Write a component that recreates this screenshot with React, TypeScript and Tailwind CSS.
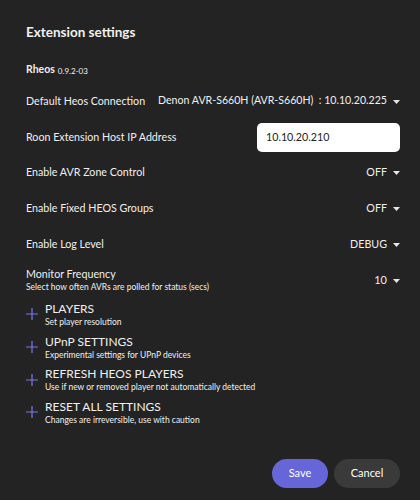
const Caret = () => (
  <svg width="7" height="4" viewBox="0 0 7 4" className="ml-[6px] mt-[2px] shrink-0">
    <path d="M0 0 L7 0 L3.5 4 Z" fill="#e6e6e6" />
  </svg>
);

const rows = [
  { label: 'Enable AVR Zone Control', value: 'OFF' },
  { label: 'Enable Fixed HEOS Groups', value: 'OFF' },
  { label: 'Enable Log Level', value: 'DEBUG' },
];

const sections = [
  { title: 'PLAYERS', sub: 'Set player resolution' },
  { title: 'UPnP SETTINGS', sub: 'Experimental settings for UPnP devices' },
  { title: 'REFRESH HEOS PLAYERS', sub: 'Use if new or removed player not automatically detected' },
  { title: 'RESET ALL SETTINGS', sub: 'Changes are irreversible, use with caution' },
];

const Plus = () => (
  <svg width="12" height="12" viewBox="0 0 12 12" className="shrink-0">
    <path d="M6 0 V12 M0 6 H12" stroke="#7a78ea" strokeWidth="1.2" />
  </svg>
);

const App = () => {
  return (
    <div
      className="w-[420px] h-[500px] bg-[#232323] text-[#f0f0f0] pl-[26px] pr-[20px] pt-4 whitespace-nowrap"
      style={{ fontFamily: 'Lato, "Open Sans", sans-serif' }}
    >
      <div className="h-8 flex items-center text-[13.5px] font-bold">Extension settings</div>

      <div className="mt-[10px] h-6 flex items-center gap-[3px]">
        <span className="text-[10.5px] font-bold">Rheos</span>
        <span className="text-[8px] mt-[1px]">0.9.2-03</span>
      </div>

      <div className="h-[38px] flex items-center justify-between text-[10.7px]">
        <span>Default Heos Connection</span>
        <span className="flex items-center text-[10.6px]">
          Denon AVR-S660H (AVR-S660H)&nbsp; : 10.10.20.225
          <Caret />
        </span>
      </div>

      <div className="h-[34px] flex items-center justify-between text-[10.7px]">
        <span>Roon Extension Host IP Address</span>
        <div className="w-[143px] h-[29px] bg-white rounded-[5px] flex items-center px-[9px] text-[#222]">
          10.10.20.210
        </div>
      </div>

      {rows.map((r) => (
        <div key={r.label} className="h-9 flex items-center justify-between text-[10.7px]">
          <span>{r.label}</span>
          <span className="flex items-center">
            {r.value}
            <Caret />
          </span>
        </div>
      ))}

      <div className="h-[36px] flex items-center justify-between">
        <div className="flex flex-col">
          <span className="text-[10.7px] leading-[14px]">Monitor Frequency</span>
          <span className="text-[8.5px] leading-[12px]">Select how often AVRs are polled for status (secs)</span>
        </div>
        <span className="flex items-center text-[11px]">
          10
          <Caret />
        </span>
      </div>

      <div className="flex flex-col">
        {sections.map((s) => (
          <div key={s.title} className="h-[32.7px] flex items-center gap-[7px]">
            <Plus />
            <div className="flex flex-col pt-[1px]">
              <span className="text-[12px] leading-[14px]">{s.title}</span>
              <span className="text-[8.5px] leading-[12px]">{s.sub}</span>
            </div>
          </div>
        ))}
      </div>

      <div className="mt-[30px] flex justify-end gap-[6px]">
        <button className="w-[56px] h-[29px] rounded-full bg-[#6766d8] text-[11px] text-white">Save</button>
        <button className="w-[66px] h-[29px] rounded-full bg-[#3a3a3a] text-[11px] text-white">Cancel</button>
      </div>
    </div>
  );
};

export default App;
